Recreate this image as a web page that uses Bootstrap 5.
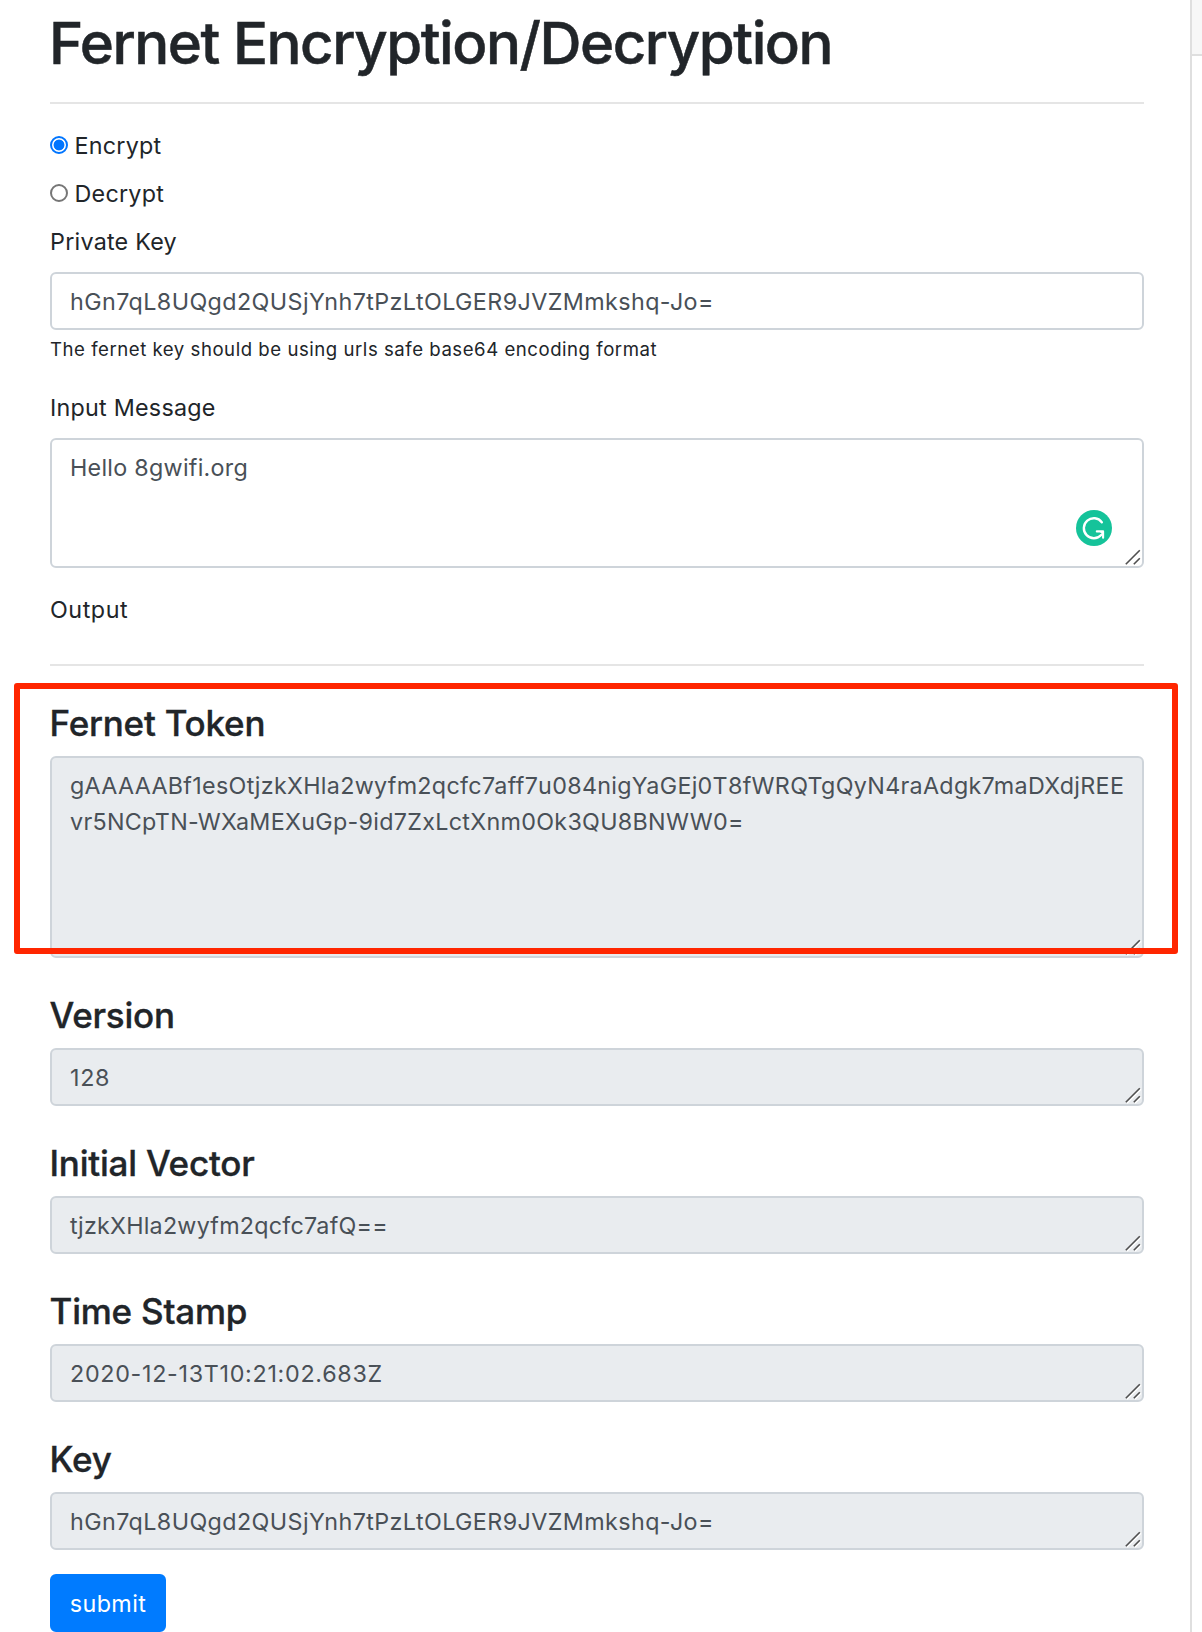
<!DOCTYPE html>
<html lang="en">
<head>
<meta charset="utf-8">
<meta name="viewport" content="width=device-width, initial-scale=1">
<title>Fernet Encryption/Decryption</title>
<link href="https://cdn.jsdelivr.net/npm/bootstrap@5.3.0/dist/css/bootstrap.min.css" rel="stylesheet">
<style>
  body { font-family: Inter, "Liberation Sans", sans-serif; font-size: 23.3px; line-height: 36px; letter-spacing: .25px; color: #212529; height: 1632px; overflow: hidden; }
  .main-pane { width: 1190px; padding: 6px 46px 0 50px; }
  .side-pane { width: 12px; height: 1632px; border-left: 2px solid #dfdfdf; }
  .side-head { height: 56px; background: #f7f7f7; border-bottom: 2px solid #dfdfdf; }
  .page-title { font-size: 58.2px; line-height: 72px; height: 72px; padding-top: 1px; margin-bottom: 24px; margin-left: -1px; font-weight: 500; -webkit-text-stroke: .5px #212529; letter-spacing: -1.46px; white-space: nowrap; }
  .rule { height: 2px; background: #e5e5e5; }
  .rule-top { margin-bottom: 23px; }
  .rule-output { margin-bottom: 36px; }
  .choice { height: 36px; margin-bottom: 12px; gap: 6.5px; }
  .choice span { padding-top: 2px; }
  .choice input { appearance: none; width: 18px; height: 18px; margin: 0; border: 2px solid #767676; border-radius: 50%; background: #fff; }
  .choice input:checked { border: 2px solid #0075ff; background: radial-gradient(circle, #0075ff 0 5px, #fff 5.8px); }
  .caption { display: block; height: 36px; padding-top: 1px; margin-bottom: 13px; }
  .form-control, .form-control:focus { font-size: 23.3px; line-height: 36px; padding: 9px 18px; letter-spacing: .41px; border: 2px solid #ced4da; border-radius: 6px; color: #495057; resize: none; overflow: hidden; display: block; min-height: 0; box-shadow: none; }
  textarea.form-control { padding: 10px 17px 8px 18px; white-space: pre; }
  .form-control[readonly] { background: #e9ecef; }
  .form-control.track-msg { letter-spacing: .27px; }
  .form-control.track-token { letter-spacing: .3px; }
  .form-control.track-vector { letter-spacing: .23px; }
  .form-control.track-digits { letter-spacing: .7px; }
  .rows-1 { height: 58px; } .rows-3 { height: 130px; } .rows-5 { height: 202px; }
  .hint { font-size: 18.6px; letter-spacing: .53px; height: 36px; margin: 1px 0 22px; }
  .output-label { height: 36px; padding-top: 1px; margin: 23px 0 37px; letter-spacing: .55px; }
  .field-title { font-size: 35px; line-height: 43px; margin-bottom: 11px; margin-left: -.5px; font-weight: 500; -webkit-text-stroke: .35px #212529; letter-spacing: -.22px; }
  .result { margin-bottom: 36px; }
  .grip { position: absolute; right: 0; bottom: 0; width: 20px; height: 20px; }
  .assist { position: absolute; right: 32px; bottom: 22px; width: 36px; height: 36px; }
  .frame-mark { position: absolute; left: -36px; right: -34px; top: -19px; height: 271px; border: 6px solid #ff2600; border-radius: 3px; z-index: 2; }
  .btn-send, .btn-send:hover { font-size: 23.3px; line-height: 36px; letter-spacing: .4px; padding: 10px 0 8px; border: 2px solid #007bff; background: #007bff; color: #fff; border-radius: 6px; width: 116px; height: 58px; }
</style>
<script src="https://cdn.jsdelivr.net/npm/bootstrap@5.3.0/dist/js/bootstrap.bundle.min.js"></script>
</head>
<body>
<svg class="d-none">
  <symbol id="grip" viewBox="0 0 20 20">
    <path d="M3 17.3 17 3.3M11 17.3l6-6" stroke="#fff" stroke-width="1.4" fill="none"/>
    <path d="M1.8 16.2 15.8 2.2M9.8 16.2l6-6" stroke="#505050" stroke-width="1.6" fill="none"/>
  </symbol>
</svg>
<div class="d-flex">
  <main class="main-pane flex-shrink-0">
    <h1 class="page-title">Fernet Encryption/Decryption</h1>
    <div class="rule rule-top"></div>
    <form onsubmit="return false">
      <label class="choice d-flex align-items-center"><input type="radio" name="op" checked><span>Encrypt</span></label>
      <label class="choice d-flex align-items-center"><input type="radio" name="op"><span>Decrypt</span></label>
      <label class="caption" for="pk">Private Key</label>
      <input id="pk" class="form-control rows-1" value="hGn7qL8UQgd2QUSjYnh7tPzLtOLGER9JVZMmkshq-Jo=">
      <div class="hint">The fernet key should be using urls safe base64 encoding format</div>
      <label class="caption" for="msg">Input Message</label>
      <div class="position-relative">
        <textarea id="msg" class="form-control rows-3 track-msg" spellcheck="false">Hello 8gwifi.org</textarea>
        <svg class="assist" viewBox="0 0 36 36">
          <circle cx="18" cy="18" r="18" fill="#15c39a"/>
          <path d="M25.8 12.2A10 10 0 1 0 25.2 25" fill="none" stroke="#fff" stroke-width="2.4" stroke-linecap="round"/>
          <path d="M20.8 21.4h6.3v6.4" fill="none" stroke="#fff" stroke-width="2.1" stroke-linecap="round" stroke-linejoin="round"/>
          <path d="M23.5 21.4h3.6v4.2z" fill="#fff"/>
        </svg>
        <svg class="grip"><use href="#grip"/></svg>
      </div>
      <div class="output-label">Output</div>
      <div class="rule rule-output"></div>

      <div class="result position-relative">
        <h4 class="field-title">Fernet Token</h4>
        <div class="position-relative">
          <textarea class="form-control rows-5 track-token" readonly spellcheck="false">gAAAAABf1esOtjzkXHla2wyfm2qcfc7aff7u084nigYaGEj0T8fWRQTgQyN4raAdgk7maDXdjREE
vr5NCpTN-WXaMEXuGp-9id7ZxLctXnm0Ok3QU8BNWW0=</textarea>
          <svg class="grip"><use href="#grip"/></svg>
        </div>
        <div class="frame-mark"></div>
      </div>
      <div class="result">
        <h4 class="field-title">Version</h4>
        <div class="position-relative"><textarea class="form-control rows-1 track-digits" readonly>128</textarea><svg class="grip"><use href="#grip"/></svg></div>
      </div>
      <div class="result">
        <h4 class="field-title">Initial Vector</h4>
        <div class="position-relative"><textarea class="form-control rows-1 track-vector" readonly>tjzkXHla2wyfm2qcfc7afQ==</textarea><svg class="grip"><use href="#grip"/></svg></div>
      </div>
      <div class="result">
        <h4 class="field-title">Time Stamp</h4>
        <div class="position-relative"><textarea class="form-control rows-1 track-digits" readonly>2020-12-13T10:21:02.683Z</textarea><svg class="grip"><use href="#grip"/></svg></div>
      </div>
      <div class="mb-4">
        <h4 class="field-title">Key</h4>
        <div class="position-relative"><textarea class="form-control rows-1" readonly>hGn7qL8UQgd2QUSjYnh7tPzLtOLGER9JVZMmkshq-Jo=</textarea><svg class="grip"><use href="#grip"/></svg></div>
      </div>
      <button class="btn btn-send d-block">submit</button>
    </form>
  </main>
  <aside class="side-pane flex-shrink-0"><div class="side-head"></div></aside>
</div>
</body>
</html>
